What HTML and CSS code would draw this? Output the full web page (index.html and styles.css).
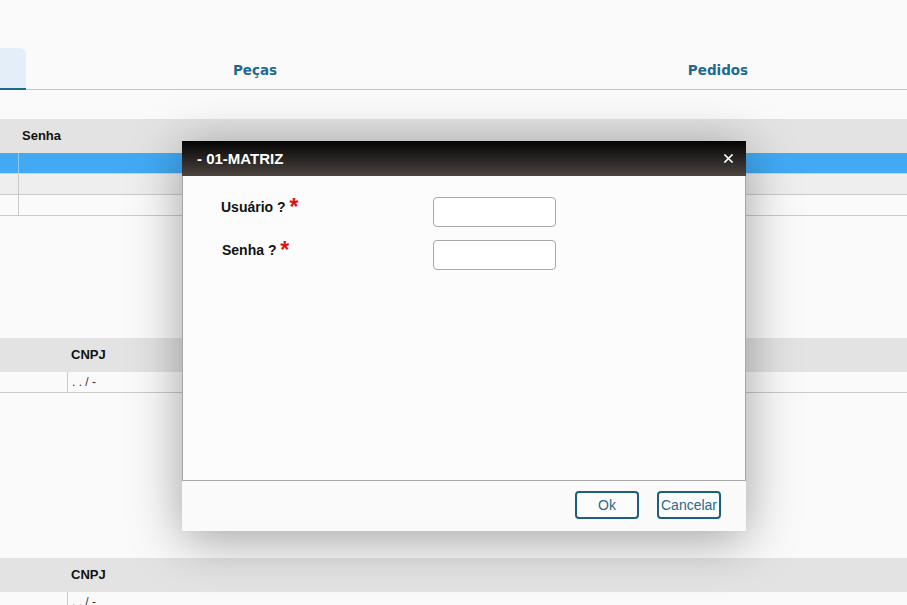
FILE: index.html
```html
<!DOCTYPE html>
<html lang="pt-BR">
<head>
<meta charset="utf-8">
<title>Login</title>
<link rel="stylesheet" href="styles.css">
</head>
<body>
<div class="tabs">
  <div class="tab tab-active"></div>
  <div class="tab">Peças</div>
  <div class="tab tab-last">Pedidos</div>
</div>

<div class="grid grid-1">
  <div class="grid-head"><div class="cell c1"></div><div class="cell">Senha</div></div>
  <div class="grid-row row-selected"><div class="cell c1"></div><div class="cell"></div></div>
  <div class="grid-row row-alt"><div class="cell c1"></div><div class="cell"></div></div>
  <div class="grid-row"><div class="cell c1"></div><div class="cell"></div></div>
</div>

<div class="grid grid-2">
  <div class="grid-head"><div class="cell c1"></div><div class="cell">CNPJ</div></div>
  <div class="grid-row"><div class="cell c1"></div><div class="cell">. . / -</div></div>
</div>

<div class="grid grid-3">
  <div class="grid-head"><div class="cell c1"></div><div class="cell">CNPJ</div></div>
  <div class="grid-row"><div class="cell c1"></div><div class="cell">. . / -</div></div>
</div>

<div class="modal">
  <div class="modal-title">
    <span>- 01-MATRIZ</span>
    <svg class="close" width="9" height="9" viewBox="0 0 9 9"><path d="M1 1L8 8M8 1L1 8" stroke="#fff" stroke-width="1.6" stroke-linecap="square"/></svg>
  </div>
  <div class="modal-body">
    <div class="form-row">
      <label class="lbl">Usuário ? <span class="req">*</span></label>
      <input class="inp" type="text">
    </div>
    <div class="form-row">
      <label class="lbl lbl-2">Senha ? <span class="req">*</span></label>
      <input class="inp" type="password">
    </div>
  </div>
  <div class="modal-footer">
    <button class="btn">Ok</button>
    <button class="btn">Cancelar</button>
  </div>
</div>
</body>
</html>
```
FILE: styles.css
```css
* { box-sizing: border-box; }
html, body { margin: 0; padding: 0; }
body {
  background: #fafafa;
  font-family: "Liberation Sans", Arial, sans-serif;
  width: 907px;
  height: 605px;
  overflow: hidden;
  position: relative;
}
.tabs {
  margin-top: 48px;
  display: flex;
  height: 42px;
  border-bottom: 1px solid #c6c6c6;
}
.tab {
  flex: 0 0 458px;
  height: 41px;
  line-height: 44px;
  text-align: center;
  font-family: "DejaVu Sans", Verdana, sans-serif;
  font-weight: bold;
  font-size: 13.5px;
  color: #1e6a8e;
}
.tab-last { flex: 0 0 468px; }
.tab-active {
  flex: 0 0 26px;
  height: 42px;
  background: #e3eef9;
  border-bottom: 2px solid #1e6a8e;
  border-top-right-radius: 6px;
  margin-bottom: -1px;
}
.grid { width: 100%; }
.grid-1 { margin-top: 29px; }
.grid-2 { margin-top: 122px; }
.grid-3 { margin-top: 165px; }
.grid-head {
  display: flex;
  height: 34px;
  background: #e3e3e3;
  font-weight: bold;
  font-size: 13px;
  color: #111;
}
.grid-head .cell { line-height: 34px; padding-left: 4px; }
.grid-row {
  display: flex;
  height: 21px;
  border-bottom: 1px solid #c9c9c9;
  font-size: 12px;
  color: #333;
}
.grid-row .cell { border-left: 1px solid #c9c9c9; padding-left: 4px; line-height: 20px; }
.grid-row .cell.c1 { border-left: none; }
.grid-1 .c1 { flex: 0 0 18px; }
.grid-2 .c1, .grid-3 .c1 { flex: 0 0 67px; }
.cell { flex: 1; }
.row-selected { background: #42aaf5; border-bottom-color: #b8dcf8; }
.row-selected .cell { border-left-color: #8ec8f2; }
.row-alt { background: #eeeeee; }

.modal {
  position: absolute;
  left: 182px;
  top: 141px;
  width: 564px;
  height: 390px;
  background: #fafafa;
  box-shadow: 0 8px 48px rgba(0,0,0,0.36);
  display: flex;
  flex-direction: column;
}
.modal-title {
  height: 35px;
  flex: 0 0 35px;
  background: linear-gradient(#040404, #4b443f);
  color: #fff;
  font-weight: bold;
  font-size: 15px;
  display: flex;
  align-items: center;
  justify-content: space-between;
  padding: 0 13px 0 15px;
}
.close { display: block; }
.modal-body {
  flex: 0 0 305px;
  background: #fcfcfc;
  border: 1px solid #a6a6a6;
  border-top: none;
  padding: 21px 0 0 38px;
}
.form-row {
  display: flex;
  height: 43px;
  align-items: flex-start;
}
.lbl {
  flex: 0 0 212px;
  font-weight: bold;
  font-size: 14px;
  line-height: 17px;
  padding-top: 2px;
  color: #111;
}
.lbl-2 { padding-left: 1px; }
.req {
  color: #e31010;
  font-size: 23px;
  line-height: 10px;
  vertical-align: top;
  position: relative;
  top: 3px;
}
.inp {
  width: 123px;
  height: 30px;
  border: 1px solid #a9a9a9;
  border-radius: 4px;
  background: #fff;
  margin: 0;
  padding: 0 4px;
}
.modal-footer {
  flex: 1;
  display: flex;
  justify-content: flex-end;
  align-items: flex-start;
  gap: 18px;
  padding: 10px 25px 0 0;
  background: #fafafa;
}
.btn {
  width: 64px;
  height: 28px;
  padding: 0;
  border: 2px solid #1e5f7c;
  border-radius: 4px;
  background: #fcfcfc;
  color: #2a6a8b;
  font-family: "Liberation Sans", Arial, sans-serif;
  font-size: 14px;
}
```
